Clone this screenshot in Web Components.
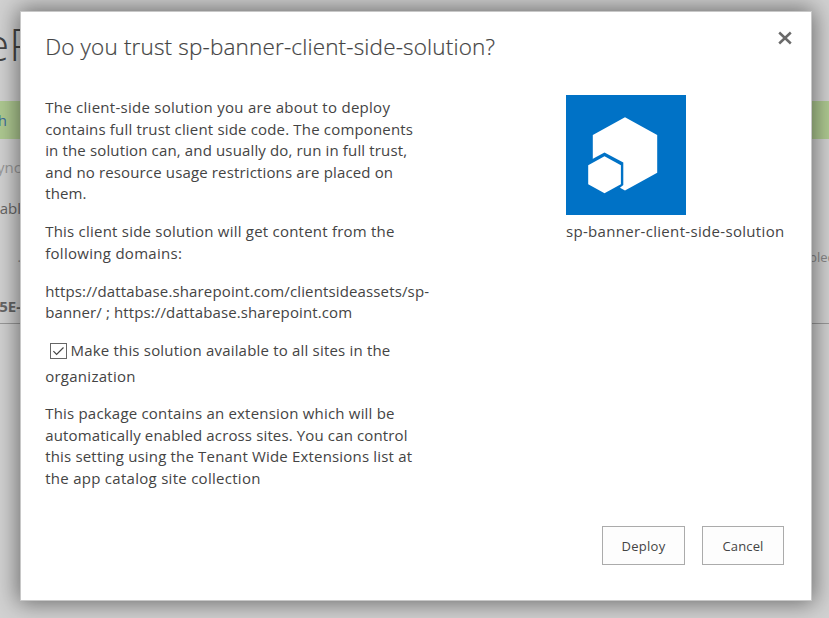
<!DOCTYPE html>
<html lang="en">
<head>
<meta charset="utf-8">
<title>Do you trust sp-banner-client-side-solution?</title>
<style>
html,body{margin:0;height:100%;overflow:hidden}
body{background:#d2d2d2;color:#444;font-family:"Open Sans","Noto Sans",sans-serif}
</style>
</head>
<body>
<trust-page></trust-page>
<script>
const define = (name, html, setup) => customElements.define(name, class extends HTMLElement {
  connectedCallback() {
    if (this.shadowRoot) return;
    const t = document.createElement('template');
    t.innerHTML = html;
    this.attachShadow({mode: 'open'}).append(t.content.cloneNode(true));
    if (setup) setup.call(this);
  }
});

/* One line of text whose tracking is set so that it spans the width in its "w" attribute. */
define('text-line', `<style>:host{display:block;white-space:nowrap}span{display:inline-block}</style><span><slot></slot></span>`, function () {
  const span = this.shadowRoot.querySelector('span');
  const natural = span.getBoundingClientRect().width;
  span.style.letterSpacing = ((+this.getAttribute('w') - natural) / this.textContent.length) + 'px';
});

define('check-box', `<style>:host{display:block;width:17px;height:17px;flex:none}svg{display:block}</style>
<svg width="17" height="17" viewBox="0 0 17 17"><rect x=".5" y=".5" width="16" height="15" fill="#fff" stroke="#666"/><path d="M3.4 8.1l3.2 3.4 6.9-7" fill="none" stroke="#444" stroke-width="1.15"/></svg>`);

define('close-button', `<style>:host{display:block;width:14px;height:14px}svg{display:block}</style>
<svg width="14" height="14" viewBox="0 0 14 14"><path d="M1.2 1.5l11.6 11M12.8 1.5l-11.6 11" stroke="#6a6a6a" stroke-width="2.5"/></svg>`);

define('solution-logo', `<style>:host{display:block;width:120px;height:120px}svg{display:block}</style>
<svg width="120" height="120" viewBox="0 0 120 120"><path fill="#0072c6" d="M0 0h120v120H0z"/><path fill="#fff" d="M59 22.2l32.2 17.8v37.8L59 95.4 26.8 77.8V40z"/><path fill="#0072c6" d="M38.5 57.5l18.8 10.1v22.4l-3 2.6-15.8 9.1L19 91V68z"/><path fill="#fff" d="M38.5 61.2l16.4 9v19.1l-16.4 8.9-16.3-8.9V70.2z"/></svg>`);

define('push-button', `<style>:host{display:block}button{all:unset;box-sizing:border-box;width:100%;height:39px;display:flex;justify-content:center;align-items:center;border:1px solid #ababab;background:#fdfdfd;font-size:13px;line-height:20px;padding-top:1px}</style><button><slot></slot></button>`);

/* The dimmed page that lies behind the dialog. */
define('page-backdrop', `<style>
:host{display:block;width:829px;height:618px;overflow:hidden}
div{display:flex;justify-content:space-between;white-space:nowrap;box-sizing:border-box;overflow:hidden}
.l{width:21px;display:flex;justify-content:flex-end;overflow:hidden;box-sizing:border-box}
.title{height:101px;padding-top:12px;font-size:44px;line-height:64px;font-weight:300;color:#444}
.title .l{justify-content:flex-start}.title i{font-style:normal;margin-left:-15px}
.bar{height:38px;background:#afca92;color:#3d6d9e;font-size:15px;line-height:38px}
.bar .l{padding-right:14px}
.row{font-size:15px;line-height:20px;height:20px;color:#666}
.sync{margin-top:18px;color:#999}.en{margin-top:21px}
.hd{margin-top:29px;font-size:13px;color:#888}.hd b{font-weight:400;width:20px;overflow:hidden}
.id{margin-top:29px;height:28px;font-weight:700;font-size:15px;border-bottom:1px solid #999}
</style>
<div class="title"><span class="l"><i>eP</i></span></div>
<div class="bar"><span class="l">h</span></div>
<div class="row sync"><span class="l">ync</span></div>
<div class="row en"><span class="l">abl</span></div>
<div class="row hd"><span class="l">.</span><b>bled</b></div>
<div class="row id"><span class="l">5E-</span></div>`);

define('trust-dialog', `<style>
:host{display:flex;flex-direction:column;box-sizing:border-box;width:792px;height:590px;background:#fff;border:1px solid #c8c8c8;box-shadow:0 0 22px 2px rgba(0,0,0,.5);padding:18px 26px 35px 24.2px}
header{display:flex;justify-content:space-between;height:65px}
h1{margin:0;font-size:22.5px;line-height:34px;font-weight:300;-webkit-text-stroke:.2px #444}
close-button{margin:1px -7px 0 0}
main{display:flex;justify-content:space-between;flex:1;font-size:15px;line-height:21.6px}
.copy{padding-top:2px}
p{margin:0 0 16.2px}
.check{line-height:26px;margin:-2.8px 0 14.2px}
.check div{display:flex;align-items:center;padding-left:5px;gap:3.3px}
check-box{margin-top:3px}
aside{width:219px}
aside text-line{margin-top:6px}
footer{display:flex;justify-content:flex-end;gap:17px;padding-right:1px}
.d{width:83px}.c{width:82px}
</style>
<header><h1><text-line w="450">Do you trust sp-banner-client-side-solution?</text-line></h1><close-button></close-button></header>
<main><section class="copy">
<p><text-line w="345">The client-side solution you are about to deploy</text-line><text-line w="368">contains full trust client side code. The components</text-line><text-line w="362">in the solution can, and usually do, run in full trust,</text-line><text-line w="348">and no resource usage restrictions are placed on</text-line><text-line w="41.5">them.</text-line></p>
<p><text-line w="349.5">This client side solution will get content from the</text-line><text-line w="137">following domains:</text-line></p>
<p><text-line w="384">https://dattabase.sharepoint.com/clientsideassets/sp-</text-line><text-line w="307">banner/ ; https://dattabase.sharepoint.com</text-line></p>
<section class="check"><div><check-box></check-box><text-line w="320">Make this solution available to all sites in the</text-line></div><text-line w="90.5">organization</text-line></section>
<p><text-line w="349.5">This package contains an extension which will be</text-line><text-line w="362.5">automatically enabled across sites. You can control</text-line><text-line w="367">this setting using the Tenant Wide Extensions list at</text-line><text-line w="215.5">the app catalog site collection</text-line></p>
</section>
<aside><solution-logo></solution-logo><text-line w="218.5">sp-banner-client-side-solution</text-line></aside></main>
<footer><push-button class="d"><text-line w="44">Deploy</text-line></push-button><push-button class="c"><text-line w="41">Cancel</text-line></push-button></footer>`);

define('trust-page', `<style>:host{display:block;position:relative;width:829px;height:618px;overflow:hidden}trust-dialog{position:absolute;left:20px;top:11px}</style><page-backdrop></page-backdrop><trust-dialog></trust-dialog>`);
</script>
</body>
</html>
